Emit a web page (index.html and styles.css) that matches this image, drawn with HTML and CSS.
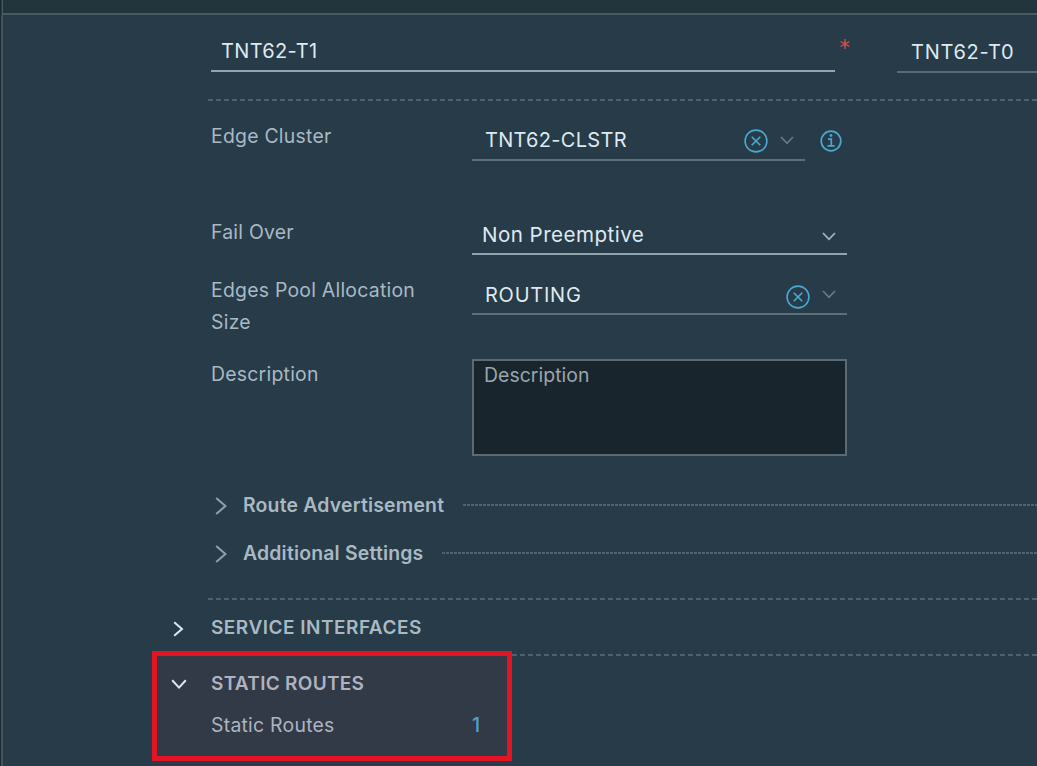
FILE: index.html
```html
<!DOCTYPE html>
<html lang="en">
<head>
<meta charset="utf-8">
<title>Tier-1 Gateway</title>
<link rel="stylesheet" href="styles.css">
</head>
<body>
<div class="page">
  <div class="topbar"></div>
  <main class="panel">
    <div class="name-row">
      <div class="name-field"><span class="t-name">TNT62-T1</span></div>
      <svg class="required" viewBox="0 0 12 12"><path d="M6 1v10M1.6 3.5l8.8 5M10.4 3.5l-8.8 5"/></svg>
      <div class="linked-field"><span class="t-linked">TNT62-T0</span></div>
    </div>
    <div class="dashes"></div>

    <div class="form-row row-cluster">
      <div class="label"><span class="l-cluster">Edge Cluster</span></div>
      <div class="field narrow">
        <span class="value t-cluster">TNT62-CLSTR</span>
        <svg class="clear" viewBox="0 0 24 24"><circle cx="12" cy="12" r="10.9"/><path d="M7.7 7.7l8.6 8.6M16.3 7.7l-8.6 8.6"/></svg>
        <svg class="caret dim" viewBox="0 0 14 9"><path d="M1 1l6 6.3L13 1"/></svg>
      </div>
      <svg class="info" viewBox="0 0 22 22"><circle cx="11" cy="11" r="9.8"/><path d="M8 9.2h3.3v6.4M7.5 15.8h7.2"/><circle class="dot" cx="11" cy="5.5" r="1.4"/></svg>
    </div>

    <div class="form-row row-failover">
      <div class="label"><span class="l-fail">Fail Over</span></div>
      <div class="field bright">
        <span class="value t-non">Non Preemptive</span>
        <svg class="caret" viewBox="0 0 14 9"><path d="M1 1l6 6.3L13 1"/></svg>
      </div>
    </div>

    <div class="form-row row-pool">
      <div class="label"><span class="l-pool">Edges Pool Allocation</span><br><span class="l-size">Size</span></div>
      <div class="field">
        <span class="value t-routing">ROUTING</span>
        <svg class="clear" viewBox="0 0 24 24"><circle cx="12" cy="12" r="10.9"/><path d="M7.7 7.7l8.6 8.6M16.3 7.7l-8.6 8.6"/></svg>
        <svg class="caret dim" viewBox="0 0 14 9"><path d="M1 1l6 6.3L13 1"/></svg>
      </div>
    </div>

    <div class="form-row row-desc">
      <div class="label"><span class="l-desc">Description</span></div>
      <div class="textarea"><span class="placeholder">Description</span></div>
    </div>

    <div class="sub-row">
      <svg class="chevron" viewBox="0 0 12 18"><path d="M1.2 1l9.2 8-9.2 8"/></svg>
      <span class="sub-title">Route Advertisement</span>
      <div class="dots"></div>
    </div>
    <div class="sub-row">
      <svg class="chevron" viewBox="0 0 12 18"><path d="M1.2 1l9.2 8-9.2 8"/></svg>
      <span class="sub-title">Additional Settings</span>
      <div class="dots"></div>
    </div>

    <div class="dashes section-rule"></div>
    <div class="section">
      <svg class="expander" viewBox="0 0 16 16"><path d="M4.2 1.2l7.8 6.8-7.8 6.8"/></svg>
      <span class="section-title h-service">SERVICE INTERFACES</span>
    </div>
    <div class="dashes"></div>
    <div class="static-section">
      <div class="highlight">
        <div class="highlight-head">
          <svg class="expander" viewBox="0 0 16 16"><path d="M1.2 4.2L8 11.6l6.8-7.4"/></svg>
          <span class="section-title h-static">STATIC ROUTES</span>
        </div>
        <div class="highlight-body">
          <span class="l-static">Static Routes</span>
          <a class="count">1</a>
        </div>
      </div>
    </div>
  </main>
</div>
</body>
</html>
```
FILE: styles.css
```css
* { box-sizing: border-box; }
body {
  margin: 0;
  width: 1037px;
  height: 766px;
  overflow: hidden;
  background: #273b48;
  font-family: Inter, "Liberation Sans", sans-serif;
  font-size: 19.4px;
  color: #a9b9c4;
}
svg { display: block; flex: none; fill: none; overflow: visible; }
span { white-space: nowrap; }
.page {
  height: 766px;
  border-left: 1px solid #1c2a33;
  overflow: hidden;
  background: linear-gradient(#485a66, #485a66) 1px 0 / 1px 15px no-repeat;
}
.topbar { height: 15px; margin-left: 2px; background: #22343c; border-bottom: 2px solid #465b66; }
.panel { height: 751px; border-left: 2px solid #43545f; padding-left: 205px; }

.name-row { display: flex; height: 84px; padding-left: 3px; color: #dfe9f0; font-size: 20px; }
.name-field { width: 624px; height: 57px; padding-left: 10px; line-height: 72px; border-bottom: 2px solid #91a5b0; }
.required { width: 12px; height: 12px; margin: 23px 46px 0 4px; stroke: #d9514b; stroke-width: 1.4; }
.linked-field { flex: 1; height: 58px; padding-left: 14px; line-height: 74px; border-bottom: 2px solid #576b77; }
.t-name { letter-spacing: 0.35px; }
.t-linked { letter-spacing: 0.75px; }
.dashes { height: 2px; background: repeating-linear-gradient(90deg, #4f636e 0 5px, transparent 5px 8px); }

.form-row { display: flex; padding-left: 3px; }
.label { width: 261px; line-height: 32px; flex: none; letter-spacing: 0.25px; }
.row-cluster { height: 114px; padding-top: 18px; }
.row-failover { height: 60px; }
.row-pool { height: 83px; }
.row-desc { height: 122px; }
.row-cluster .label { margin-top: 1px; }
.row-failover .label { margin-top: 1px; }
.row-pool .label { margin-top: -1px; }
.field { display: flex; align-items: center; width: 375px; height: 40px; padding-right: 11px; border-bottom: 2px solid #5c707c; color: #dfe9f0; font-size: 20px; }
.narrow { width: 333px; height: 42px; }
.bright { height: 40px; border-color: #91a5b0; }
.value { flex: 1; padding-left: 13px; }
.t-cluster { letter-spacing: 0.3px; padding-top: 2px; }
.t-non { padding: 0 0 0 10px; font-size: 20.6px; letter-spacing: 0.45px; }
.t-routing { letter-spacing: 0.75px; padding-top: 1px; }
.clear { width: 24px; height: 24px; margin: 4px 12px 0 0; stroke: #4ba8d2; stroke-width: 1.6; }
.row-pool .clear { margin-top: 5px; }
.caret { width: 14px; height: 9px; stroke: #a8b3b8; stroke-width: 1.8; }
.bright .caret { margin-top: 4px; }
.dim { stroke: #687984; }
.narrow .dim { margin-top: 2px; }
.info { width: 22px; height: 22px; margin: 11px 0 0 15px; stroke: #4ba8d2; stroke-width: 1.7; }
.dot { fill: #4ba8d2; stroke: none; }
.textarea { width: 375px; height: 97px; margin-top: 1px; padding-left: 10px; line-height: 29px; background: #19252d; border: 2px solid #586b77; color: #99a6ad; letter-spacing: 0.06px; }

.sub-row { display: flex; align-items: center; height: 48px; padding-left: 7px; }
.chevron { width: 12px; height: 18px; margin: 4px 16px 0 0; stroke: #8f9fa8; stroke-width: 2.1; }
.sub-title { font-weight: 600; letter-spacing: 0.2px; padding-top: 2px; }
.dots { flex: 1; height: 2px; margin: 2px 0 0 19px; background: repeating-linear-gradient(90deg, #4f636e 0 2.6px, transparent 2.6px 4px); }
.section-rule { margin-top: 22px; }
.section { display: flex; align-items: center; height: 54px; margin-left: -38px; }
.section-title { font-weight: 600; font-size: 19px; letter-spacing: 0.5px; }
.h-static { letter-spacing: 0.3px; padding-top: 2px; }
.expander { width: 16px; height: 16px; margin: 3px 25px 0 0; stroke: #dceaf2; stroke-width: 2; }
.static-section { margin: -5px 0 0 -56px; position: relative; }
.highlight { width: 360px; height: 110px; padding: 5px 0 0 14px; border: 5px solid #e31525; background: #323a47; color: #afb3c0; }
.highlight-head { display: flex; align-items: center; height: 42px; }
.highlight-head .expander { margin: 3px 24px 0 0; }
.highlight-body { display: flex; align-items: center; height: 42px; padding: 1px 0 0 40px; }
.l-static { letter-spacing: 0.25px; }
.count { margin-left: auto; margin-right: 27px; color: #4ba3d0; font-weight: 500; }
```
